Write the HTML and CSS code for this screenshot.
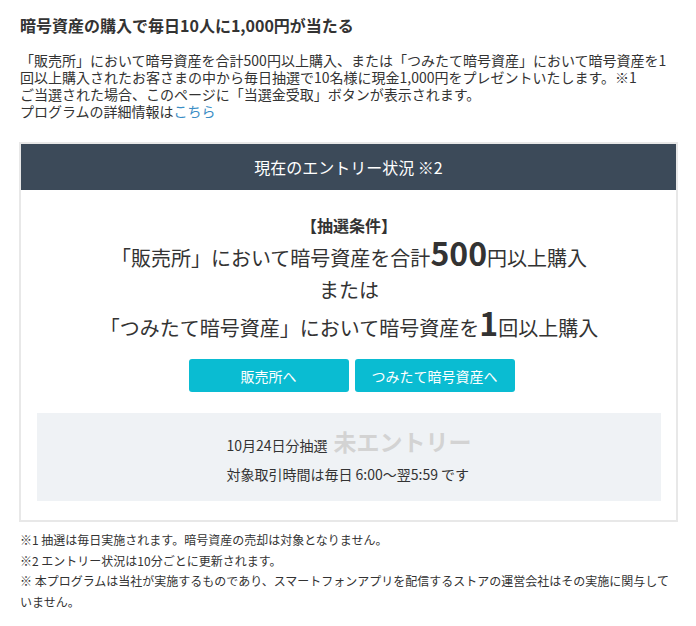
FILE: index.html
```html
<!DOCTYPE html>
<html lang="ja">
<head>
    <meta charset="UTF-8">
    <title>毎日10人に1,000円が当たる</title>
<link rel="stylesheet" href="styles.css">
</head>
<body>
    <div class="page">
        <h1 class="title">暗号資産の購入で毎日10人に1,000円が当たる</h1>
        <p class="lead">
            「販売所」において暗号資産を合計500円以上購入、または「つみたて暗号資産」において暗号資産を1回以上購入されたお客さまの中から毎日抽選で10名様に現金1,000円をプレゼントいたします。※1<br>
            ご当選された場合、このページに「当選金受取」ボタンが表示されます。<br>
            プログラムの詳細情報は<a href="#" class="link">こちら</a>
        </p>

        <div class="entry">
            <div class="entry-head">現在のエントリー状況 ※2</div>
            <div class="entry-body">
                <div class="cond-title">【抽選条件】</div>
                <div class="cond-line">「販売所」において暗号資産を合計<span class="big">500</span>円以上購入</div>
                <div class="cond-line">または</div>
                <div class="cond-line">「つみたて暗号資産」において暗号資産を<span class="big">1</span>回以上購入</div>

                <div class="buttons">
                    <a href="#" class="btn">販売所へ</a>
                    <a href="#" class="btn">つみたて暗号資産へ</a>
                </div>

                <div class="status">
                    <div class="status-inner">
                        <div class="status-row">10月24日分抽選 <span class="not-entry">未エントリー</span></div>
                        <div class="status-row">対象取引時間は毎日 6:00〜翌5:59 です</div>
                    </div>
                </div>
            </div>
        </div>

        <ul class="notes">
            <li>※1 抽選は毎日実施されます。暗号資産の売却は対象となりません。</li>
            <li>※2 エントリー状況は10分ごとに更新されます。</li>
            <li>※ 本プログラムは当社が実施するものであり、スマートフォンアプリを配信するストアの運営会社はその実施に関与していません。</li>
        </ul>
    </div>
</body>
</html>
```

FILE: styles.css
```css
body{
    margin: 0;
    background-color: #fff;
    color: #333;
    font-family: "Noto Sans CJK JP", sans-serif;
}
.page{
    padding: 13px 18px 0 19px;
}
.title{
    margin: 0 0 0 1px;
    font-size: 16px;
    line-height: 24px;
    font-weight: bold;
    color: #333;
}
.lead{
    margin: 15px 0 0 1px;
    font-size: 14px;
    line-height: 17px;
}
.link{
    color: #3a8dc5;
    text-decoration: none;
}

.entry{
    margin-top: 22px;
    border: 2px solid #e8e8e8;
}
.entry-head{
    height: 46px;
    background-color: #3c4a59;
    color: #fff;
    font-size: 16px;
    display: flex;
    align-items: center;
    justify-content: center;
}
.entry-body{
    padding: 24px 15px 19px 16px;
    text-align: center;
}
.cond-title{
    font-size: 16px;
    font-weight: bold;
    line-height: 22px;
}
.cond-line{
    font-size: 20px;
    line-height: 32px;
}
.big{
    font-size: 32px;
    font-weight: bold;
    line-height: 1;
}
.buttons{
    margin-top: 15px;
    padding-left: 5px;
    display: flex;
    justify-content: center;
    gap: 6px;
}
.btn{
    width: 160px;
    height: 33px;
    border-radius: 3px;
    background-color: #0abcd2;
    color: #fff;
    font-size: 14px;
    text-decoration: none;
    display: flex;
    align-items: center;
    justify-content: center;
}
.status{
    margin-top: 21px;
    height: 88px;
    background-color: #eff2f5;
    display: flex;
    flex-direction: column;
    align-items: center;
    justify-content: center;
    padding-top: 1px;
    box-sizing: border-box;
}
.status-inner{
    text-align: left;
}
.status-row{
    font-size: 14px;
    line-height: 29px;
}
.not-entry{
    font-size: 23px;
    font-weight: bold;
    color: #d3d3d3;
    margin-left: 3px;
}

.notes{
    list-style: none;
    margin: 8px 0 0 1px;
    padding: 0;
    font-size: 12px;
    line-height: 20.5px;
}
```
